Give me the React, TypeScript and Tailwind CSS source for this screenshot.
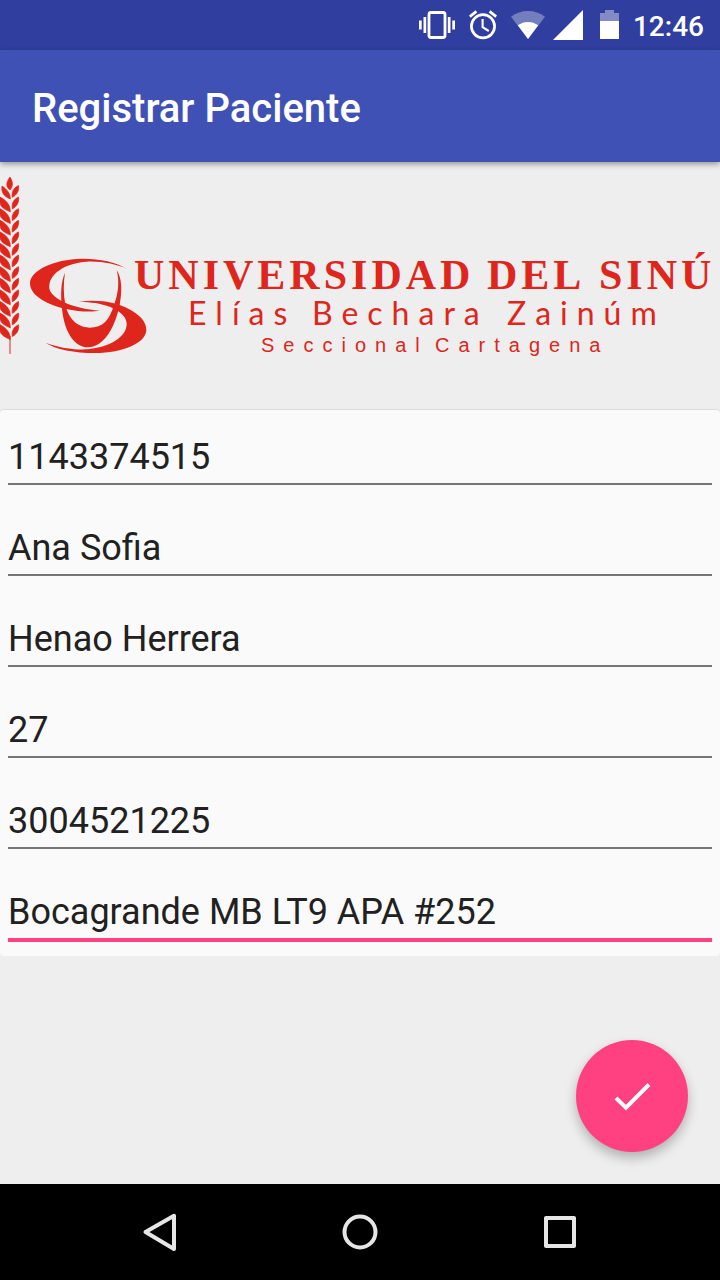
import { useState } from "react";
import type { ReactNode } from "react";

const FIELDS = [
  { name: "cedula", label: "Cédula", value: "1143374515" },
  { name: "nombres", label: "Nombres", value: "Ana Sofia" },
  { name: "apellidos", label: "Apellidos", value: "Henao Herrera" },
  { name: "edad", label: "Edad", value: "27" },
  { name: "telefono", label: "Teléfono", value: "3004521225" },
  { name: "direccion", label: "Dirección", value: "Bocagrande MB LT9 APA #252" },
];

const WHEAT_ROWS = Array.from({ length: 13 }, (_, i) => i);

function StatusBar() {
  return (
    <div className="flex h-[50px] items-center justify-end gap-3.5 bg-[#303f9f] pr-4 text-white">
      <svg width="36" height="32" viewBox="419 9 36 32" fill="currentColor" aria-hidden="true">
        <rect x="429" y="12.5" width="16" height="25" rx="2" fill="none" stroke="currentColor" strokeWidth="2.8" />
        <rect x="423.5" y="17" width="2.7" height="16" />
        <rect x="447.8" y="17" width="2.7" height="16" />
        <rect x="419" y="20.5" width="2.7" height="9" />
        <rect x="452.3" y="20.5" width="2.7" height="9" />
      </svg>
      <svg width="28" height="32" viewBox="469 9 28 32" fill="none" stroke="currentColor" aria-hidden="true">
        <circle cx="483" cy="26.3" r="11.6" strokeWidth="2.7" />
        <path d="M482.6 19v8.2l6.2 3.8" strokeWidth="2.1" />
        <path d="M469.8 16.6l6.6-5.2M496.2 16.6l-6.6-5.2" strokeWidth="2.8" />
      </svg>
      <div className="flex gap-2">
        <svg width="34" height="32" viewBox="511 9 34 32" fill="currentColor" aria-hidden="true">
          <path d="M528 39L511 16.8C521 9 535 9 545 16.8Z" opacity=".33" />
          <path d="M528 39L517.8 25.3C524 20.8 532 20.8 538.2 25.3Z" />
        </svg>
        <svg width="30" height="32" viewBox="553 9 30 32" fill="currentColor" aria-hidden="true">
          <path d="M553 40H583V10Z" />
        </svg>
      </div>
      <svg width="22" height="32" viewBox="597 9 22 32" fill="currentColor" aria-hidden="true">
        <path d="M600 13H605V10H614V13H619V21H600Z" opacity=".4" />
        <path d="M600 21H619V39H600Z" />
      </svg>
      <span className="pt-1 text-[28px] leading-8 font-medium">12:46</span>
    </div>
  );
}

function Logo() {
  return (
    <svg viewBox="0 162 720 248" className="block w-full fill-[#de261c]" role="img" aria-label="Universidad del Sinú">
      <g stroke="#de261c" strokeWidth=".7">
        <path d="M10 177C13 182 13.5 186 10 190C6 187 5.500 183 10 177Z" />
        {WHEAT_ROWS.map((i) => (
          <g key={i} transform={`translate(0 ${185.5 + i * 11.6})`}>
            <path
              d={
                i === 0
                  ? "M2 .5C7 4 10.5 8 10.3 13.5C4 11 1 7 2 .5Z"
                  : "M0 0C5 2.5 10.5 7 10.3 14.8C6 13 0 10 0 5.5Z"
              }
            />
            <path d="M18.5 0C19.5 6 16 10 12.3 11.8C11.5 6 13.5 2.5 18.5 0Z" />
          </g>
        ))}
      </g>
      <path d="M9.500 336h1v18h-1z" />
      <g transform="translate(0 150) scale(.3333)">
        <path d="M383 357C345 335 295 325 245 326C160 328 90 362 90 400C90 440 150 467 195 476C240 486 275 486 300 482C260 480 215 468 190 456C160 440 145 425 148 405C153 365 205 338 260 335C305 333 350 343 383 357Z" />
        <path d="M235 455C300 446 350 458 385 476C420 494 439 515 439 540C439 578 370 609 285 609C225 609 165 598 137 578C180 594 225 600 262 598C330 592 382 560 380 520C379 495 350 477 320 467C290 457 260 456 235 455Z" />
        <path d="M195 368C183 395 182 430 185 465C190 540 220 592 264 592C315 590 345 530 359 465C367 420 366 385 350 360C359 395 355 430 342 465C328 510 310 533 268 533C225 530 205 500 196 465C190 430 190 400 195 368Z" />
      </g>
      <text y="289" className="font-['Liberation_Serif',serif] text-[42px] font-bold tracking-[4px]">
        <tspan x="134">UNIVERSIDAD</tspan> <tspan x="487">DEL</tspan> <tspan x="599">SINÚ</tspan>
      </text>
      <text y="325" className="font-['Lato',sans-serif] text-[32px] tracking-[9px]">
        <tspan x="188">Elías</tspan> <tspan x="312">Bechara</tspan> <tspan x="507">Zainúm</tspan>
      </text>
      <text y="352" className="font-['Liberation_Sans',sans-serif] text-[20px] tracking-[9px]">
        <tspan x="261">Seccional</tspan> <tspan x="435">Cartagena</tspan>
      </text>
    </svg>
  );
}

function NavButton({ label, children }: { label: string; children: ReactNode }) {
  return (
    <button type="button" aria-label={label} className="flex items-center justify-center">
      <svg width="48" height="48" viewBox="0 0 48 48" fill="none" stroke="#e6e6e6" strokeWidth="4" strokeLinejoin="round">
        {children}
      </svg>
    </button>
  );
}

export default function App() {
  const [values, setValues] = useState(() => FIELDS.map((f) => f.value));

  return (
    <div className="flex min-h-screen flex-col bg-[#eeeeee] font-['Roboto',sans-serif]">
      <StatusBar />
      <header className="z-10 flex h-28 items-center bg-[#3f51b5] px-8 pt-1.5 shadow-[0_2px_6px_rgba(0,0,0,0.4)]">
        <h1 className="text-[40px] leading-[48px] font-medium text-white">Registrar Paciente</h1>
      </header>
      <main className="flex grow flex-col">
        <Logo />
        <form
          id="paciente"
          onSubmit={(e) => e.preventDefault()}
          className="rounded-sm bg-[#fafafa] px-2 shadow-[0_-1px_1px_rgba(0,0,0,0.08)]"
        >
          {FIELDS.map((field, i) => {
            const active = i === FIELDS.length - 1;
            return (
              <div key={field.name} className="h-[91px]">
                <input
                  name={field.name}
                  aria-label={field.label}
                  value={values[i]}
                  onChange={(e) => setValues(values.map((v, j) => (j === i ? e.target.value : v)))}
                  className={
                    active
                      ? "block h-[77px] w-full border-b-4 border-[#ff4081] pt-5 text-[36px] text-[#212121] outline-none"
                      : "block h-[75px] w-full border-b-2 border-[#757575] pt-5 text-[36px] text-[#212121] outline-none"
                  }
                />
              </div>
            );
          })}
        </form>
        <button
          type="submit"
          form="paciente"
          aria-label="Guardar"
          className="m-8 mt-auto flex size-28 items-center justify-center self-end rounded-full bg-[#ff4081] shadow-[0_6px_12px_rgba(0,0,0,0.26)]"
        >
          <svg width="48" height="48" viewBox="0 0 48 48" fill="none" stroke="white" strokeWidth="4">
            <path d="M8 26L18 35.700L41 12.500" />
          </svg>
        </button>
      </main>
      <nav className="grid h-24 grid-cols-3 bg-black px-[60px]">
        <NavButton label="Atrás">
          <path d="M9.500 24L38 7.800V41Z" />
        </NavButton>
        <NavButton label="Inicio">
          <circle cx="24" cy="24" r="15.500" />
        </NavButton>
        <NavButton label="Recientes">
          <rect x="10" y="10" width="28" height="28" />
        </NavButton>
      </nav>
    </div>
  );
}
